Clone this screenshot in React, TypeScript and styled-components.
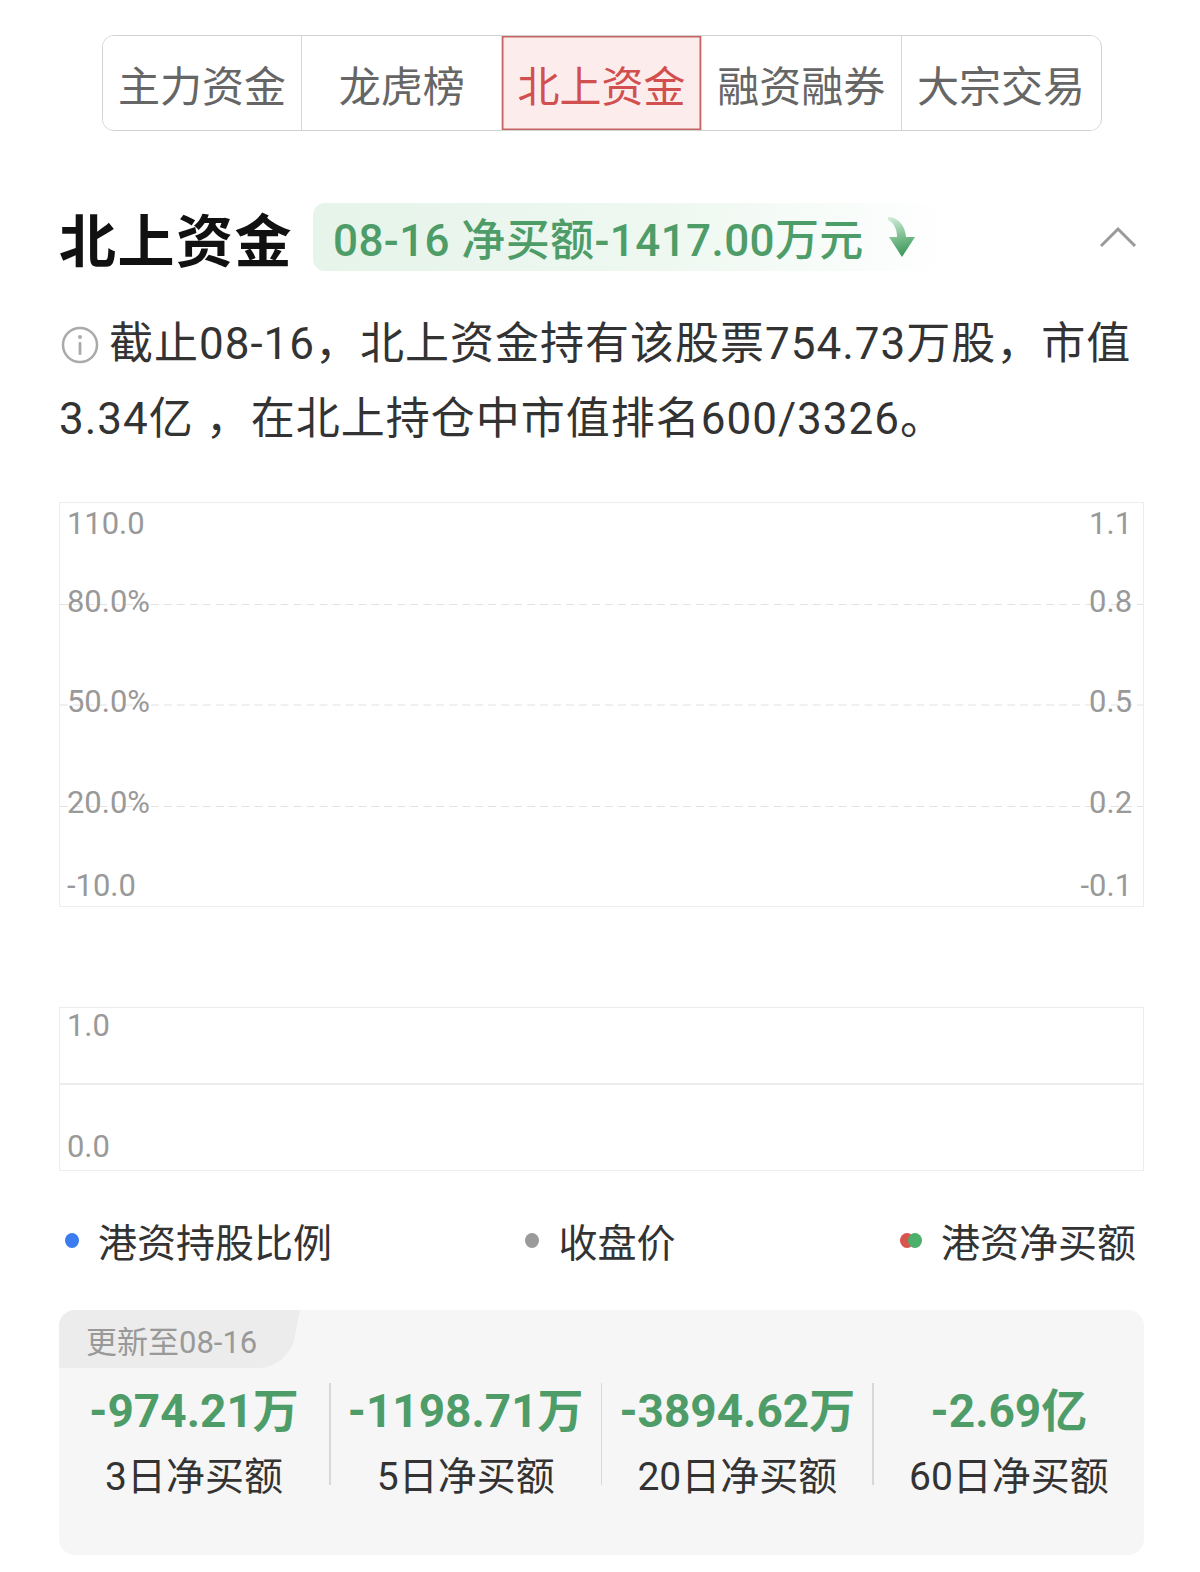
import React from "react";
import styled, { createGlobalStyle } from "styled-components";

const Global = createGlobalStyle`
  html, body { margin: 0; padding: 0; background: #fff; }
  body { font-family: "Roboto", "Noto Sans CJK SC", sans-serif; color: #333; }
`;

const Page = styled.div`
  width: 1200px;
  padding: 35px 56px 20px 59px;
  box-sizing: border-box;
`;

const Tabs = styled.div`
  width: 1000px;
  margin: 0 auto;
  display: flex;
  height: 96px;
  box-sizing: border-box;
  border: 1.5px solid #d2d2d2;
  border-radius: 12px;
  overflow: hidden;
`;

const Tab = styled.div<{ $active?: boolean; $first?: boolean }>`
  flex: 1;
  display: flex;
  align-items: center;
  justify-content: center;
  font-size: 42px;
  color: ${(p) => (p.$active ? "#d24f4f" : "#666")};
  background: ${(p) => (p.$active ? "#fdecec" : "#fff")};
  border-left: ${(p) => (p.$first ? "none" : "1.5px solid #d6d6d6")};
  box-shadow: ${(p) => (p.$active ? "inset 0 0 0 1.5px #c86363" : "none")};
  white-space: nowrap;
`;

const TitleRow = styled.div`
  display: flex;
  align-items: center;
  height: 68px;
  margin-top: 71.5px;
`;

const Title = styled.div`
  font-size: 57px;
  font-weight: 700;
  color: #111;
  letter-spacing: 1.5px;
  white-space: nowrap;
`;

const Badge = styled.div`
  margin-left: 20px;
  height: 68px;
  display: flex;
  align-items: center;
  gap: 22px;
  padding: 0 40px 0 20px;
  border-radius: 12px 0 0 12px;
  background: linear-gradient(90deg, #e6f4ea 0%, #eef8f1 55%, rgba(255, 255, 255, 0) 100%);
  color: #4e9c68;
  font-size: 44px;
  font-weight: 500;
  letter-spacing: 0.4px;
  white-space: nowrap;
`;

const Chevron = styled.div`
  margin-left: auto;
  margin-right: 7px;
  display: flex;
`;

const Info = styled.p`
  margin: 36px 0 0;
  font-size: 44px;
  line-height: 75px;
  letter-spacing: 1px;
  color: #333;
`;

const InfoIcon = styled.svg`
  width: 38px;
  height: 38px;
  vertical-align: -5px;
  margin: 0 10px 0 2px;
`;

const ChartBox = styled.div<{ $h: number; $top: number }>`
  margin-top: ${(p) => p.$top}px;
  height: ${(p) => p.$h}px;
  border: 1px solid #ececec;
  box-sizing: border-box;
`;

const ChartSvg = styled.svg`
  display: block;
  width: 100%;
  height: 100%;
`;

const Legend = styled.div`
  margin-top: 41px;
  height: 50px;
  display: grid;
  grid-template-columns: 1fr auto 1fr;
  align-items: center;
  padding: 0 8px 0 6px;
`;

const LegendItem = styled.div<{ $align: string }>`
  justify-self: ${(p) => p.$align};
  display: flex;
  align-items: center;
  font-size: 39px;
  color: #333;
  white-space: nowrap;
`;

const Dot = styled.span<{ $c: string; $shift?: number }>`
  width: 14px;
  height: 15px;
  border-radius: 50%;
  background: ${(p) => p.$c};
  display: inline-block;
  margin-left: ${(p) => p.$shift ?? 0}px;
`;

const Dots = styled.span`
  display: flex;
  margin-right: 19px;
`;

const Stats = styled.div`
  margin-top: 48px;
  background: #f6f6f6;
  border-radius: 16px;
  overflow: hidden;
  padding-bottom: 53px;
`;

const Tag = styled.div`
  position: relative;
  display: inline-flex;
  align-items: center;
  height: 58px;
  padding: 0 43px 0 27px;
  font-size: 31px;
  color: #999;
  z-index: 0;
  &::before {
    content: "";
    position: absolute;
    top: 0;
    bottom: 0;
    left: -40px;
    right: 0;
    background: #ececec;
    border-bottom-right-radius: 30px;
    transform: skewX(-11deg);
    transform-origin: top left;
    z-index: -1;
  }
`;

const StatRow = styled.div`
  display: flex;
  margin-top: 13px;
`;

const Stat = styled.div`
  flex: 1;
  display: flex;
  flex-direction: column;
  align-items: center;
`;

const Divider = styled.div`
  width: 1.5px;
  height: 102px;
  margin-top: 2px;
  background: #d8d8d8;
`;

const StatValue = styled.div`
  font-size: 46px;
  font-weight: 700;
  line-height: 60px;
  color: #4e9c68;
  white-space: nowrap;
`;

const StatLabel = styled.div`
  margin-top: 11px;
  font-size: 39px;
  line-height: 50px;
  color: #333;
  white-space: nowrap;
`;

const tabs = ["主力资金", "龙虎榜", "北上资金", "融资融券", "大宗交易"];

const leftLabels = [
  { t: "110.0", y: 21 },
  { t: "80.0%", y: 99 },
  { t: "50.0%", y: 200 },
  { t: "20.0%", y: 301 },
  { t: "-10.0", y: 384 },
];
const rightLabels = ["1.1", "0.8", "0.5", "0.2", "-0.1"];
const gridY = [102, 203, 305];

const stats = [
  { v: "-974.21万", l: "3日净买额" },
  { v: "-1198.71万", l: "5日净买额" },
  { v: "-3894.62万", l: "20日净买额" },
  { v: "-2.69亿", l: "60日净买额" },
];

const labelFont = { fontFamily: "Roboto, sans-serif", fontSize: 31, fill: "#999" };

export default function App() {
  return (
    <>
      <Global />
      <Page>
        <Tabs>
          {tabs.map((t, i) => (
            <Tab key={t} $first={i === 0} $active={i === 2}>
              {t}
            </Tab>
          ))}
        </Tabs>

        <TitleRow>
          <Title>北上资金</Title>
          <Badge>
            <span>08-16 净买额-1417.00万元</span>
            <svg width="30" height="42" viewBox="0 0 30 42">
              <defs>
                <linearGradient id="arr" x1="0" y1="0" x2="0.2" y2="1">
                  <stop offset="0" stopColor="#d6eedc" />
                  <stop offset="0.55" stopColor="#7fbf92" />
                  <stop offset="1" stopColor="#3f9a5e" />
                </linearGradient>
              </defs>
              <path
                d="M2 1 C 11 1, 19 8, 20 21 L 29 21 L 16 41 L 3 21 L 11 21 C 11 13, 8 7, 2 4 Z"
                fill="url(#arr)"
              />
            </svg>
          </Badge>
          <Chevron>
            <svg width="38" height="22" viewBox="0 0 38 22">
              <path d="M2 20 L19 3 L36 20" fill="none" stroke="#9a9a9a" strokeWidth="3" />
            </svg>
          </Chevron>
        </TitleRow>

        <Info>
          <InfoIcon viewBox="0 0 38 38">
            <circle cx="19" cy="19" r="17" fill="none" stroke="#aaa" strokeWidth="2.5" />
            <circle cx="19" cy="11" r="2" fill="#aaa" />
            <rect x="17.6" y="16" width="2.8" height="13" rx="1" fill="#aaa" />
          </InfoIcon>
          截止08-16，北上资金持有该股票754.73万股，市值3.34亿 ，在北上持仓中市值排名600/3326。
        </Info>

        <ChartBox $h={405} $top={45.5}>
          <ChartSvg viewBox="0 0 1085 405" preserveAspectRatio="none">
            {gridY.map((y) => (
              <line key={y} x1="0" x2="1085" y1={y} y2={y} stroke="#e2e2e2" strokeWidth="1.2" strokeDasharray="8 5" />
            ))}
            {leftLabels.map((l, i) => (
              <React.Fragment key={l.t}>
                <text x="7" y={l.y} dominantBaseline="central" {...labelFont}>
                  {l.t}
                </text>
                <text x="1074" y={l.y} dominantBaseline="central" textAnchor="end" {...labelFont}>
                  {rightLabels[i]}
                </text>
              </React.Fragment>
            ))}
          </ChartSvg>
        </ChartBox>

        <ChartBox $h={164} $top={100}>
          <ChartSvg viewBox="0 0 1085 164" preserveAspectRatio="none">
            <line x1="0" x2="1085" y1="77" y2="77" stroke="#ececec" strokeWidth="2" />
            <text x="7" y="18" dominantBaseline="central" {...labelFont}>
              1.0
            </text>
            <text x="7" y="140" dominantBaseline="central" {...labelFont}>
              0.0
            </text>
          </ChartSvg>
        </ChartBox>

        <Legend>
          <LegendItem $align="start">
            <Dots>
              <Dot $c="#3b7cf0" />
            </Dots>
            港资持股比例
          </LegendItem>
          <LegendItem $align="center">
            <Dots>
              <Dot $c="#9a9a9a" />
            </Dots>
            收盘价
          </LegendItem>
          <LegendItem $align="end">
            <Dots>
              <Dot $c="#d9534f" />
              <Dot $c="#4caf6a" $shift={-6} />
            </Dots>
            港资净买额
          </LegendItem>
        </Legend>

        <Stats>
          <Tag>更新至08-16</Tag>
          <StatRow>
            {stats.map((s, i) => (
              <React.Fragment key={s.l}>
                {i > 0 && <Divider />}
                <Stat>
                  <StatValue>{s.v}</StatValue>
                  <StatLabel>{s.l}</StatLabel>
                </Stat>
              </React.Fragment>
            ))}
          </StatRow>
        </Stats>
      </Page>
    </>
  );
}
